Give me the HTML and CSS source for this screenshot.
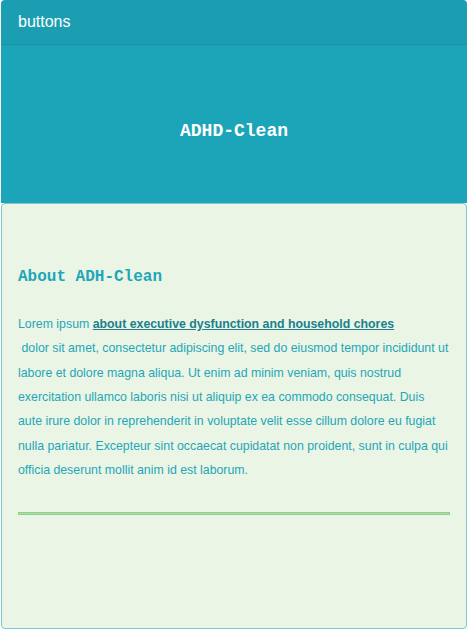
FILE: index.html
```html
<!DOCTYPE html>
<html>
<head>
<meta charset="utf-8">
<link rel="stylesheet" href="styles.css">
</head>
<body>
<div class="page">
  <div class="hero-panel">
    <div class="hero-heading">buttons</div>
    <div class="hero-body">
      <h1 class="hero-title">ADHD-Clean</h1>
    </div>
  </div>
  <div class="about-panel">
    <h2 class="about-title">About ADH-Clean</h2>
    <p class="about-text">Lorem ipsum <a class="about-link" href="#">about executive dysfunction and household chores</a><br>&nbsp;dolor sit amet, consectetur adipiscing elit, sed do eiusmod tempor incididunt ut labore et dolore magna aliqua. Ut enim ad minim veniam, quis nostrud exercitation ullamco laboris nisi ut aliquip ex ea commodo consequat. Duis aute irure dolor in reprehenderit in voluptate velit esse cillum dolore eu fugiat nulla pariatur. Excepteur sint occaecat cupidatat non proident, sunt in culpa qui officia deserunt mollit anim id est laborum.</p>
    <hr class="about-rule">
  </div>
</div>
</body>
</html>
```
FILE: styles.css
```css
html, body {
  margin: 0;
  padding: 0;
  background: #ffffff;
}
.page {
  padding: 0 1px;
  font-family: "Liberation Sans", Arial, sans-serif;
}
.hero-panel {
  border-radius: 4px 4px 0 0;
  overflow: hidden;
}
.hero-heading {
  background: #1b9eb1;
  color: #ffffff;
  font-size: 16px;
  line-height: 24px;
  padding: 10px 17px;
  border-bottom: 1px solid #1892a4;
}
.hero-body {
  background: #1ca5b8;
  height: 158px;
  box-sizing: border-box;
  padding-top: 75px;
}
.hero-title {
  margin: 0;
  text-align: center;
  font-family: "Liberation Mono", "Courier New", monospace;
  font-weight: bold;
  font-size: 18px;
  line-height: 22px;
  color: #ffffff;
}
.about-panel {
  height: 426px;
  box-sizing: border-box;
  border: 1px solid #7ec8d2;
  border-radius: 4px;
  background: #eaf5e5;
  padding: 63px 16px 0 16px;
}
.about-title {
  margin: 0;
  font-family: "Liberation Mono", "Courier New", monospace;
  font-weight: bold;
  font-size: 16px;
  line-height: 20px;
  color: #1fa6b8;
}
.about-text {
  margin: 25px 0 0 0;
  font-size: 12.33px;
  line-height: 24.33px;
  color: #1fa6b8;
}
.about-link {
  color: #207f8d;
  font-weight: bold;
  text-decoration: underline;
}
.about-rule {
  margin: 30px 0 0 0;
  height: 1px;
  border: 1px solid #8cd087;
  background: #b0dfac;
}
```
